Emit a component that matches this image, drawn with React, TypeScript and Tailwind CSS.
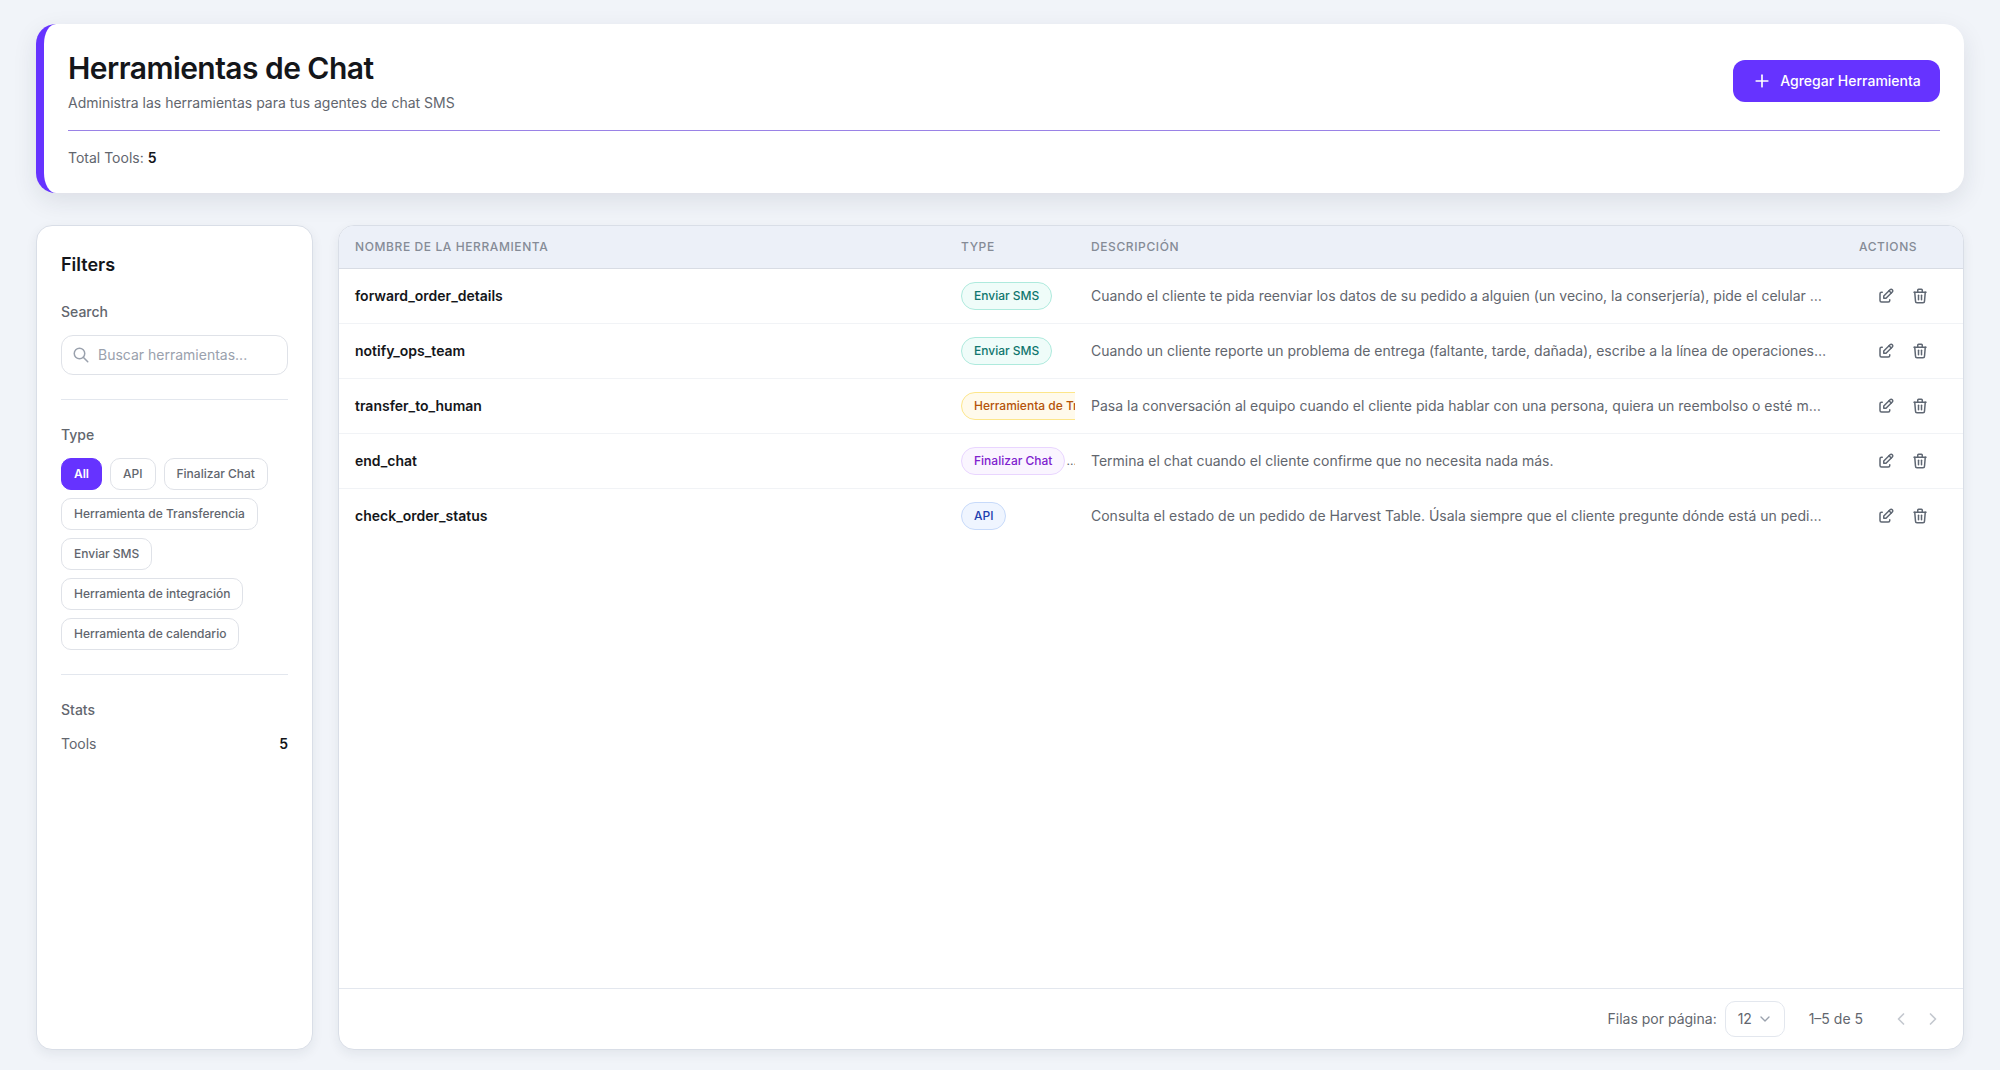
import { TbChevronDown, TbChevronLeft, TbChevronRight, TbEdit, TbPlus, TbSearch, TbTrash } from "react-icons/tb";

const FILTERS = [
  "All",
  "API",
  "Finalizar Chat",
  "Herramienta de Transferencia",
  "Enviar SMS",
  "Herramienta de integración",
  "Herramienta de calendario",
];

const TYPE_STYLES: Record<string, string> = {
  sms: "bg-[#effcf9] border-[#aeeadd] text-[#0f766e]",
  transfer: "bg-[#fffaeb] border-[#fde68a] text-[#b45309]",
  end: "bg-[#faf5ff] border-[#e9d5ff] text-[#7e22ce]",
  api: "bg-[#eff5ff] border-[#c7dafa] text-[#1e40af]",
};

const TOOLS = [
  {
    name: "forward_order_details",
    type: "Enviar SMS",
    style: "sms",
    description:
      "Cuando el cliente te pida reenviar los datos de su pedido a alguien (un vecino, la conserjería), pide el celular del destinatario y envíale el resumen.",
  },
  {
    name: "notify_ops_team",
    type: "Enviar SMS",
    style: "sms",
    description:
      "Cuando un cliente reporte un problema de entrega (faltante, tarde, dañada), escribe a la línea de operaciones con el número de pedido.",
  },
  {
    name: "transfer_to_human",
    type: "Herramienta de Transferencia",
    style: "transfer",
    description:
      "Pasa la conversación al equipo cuando el cliente pida hablar con una persona, quiera un reembolso o esté molesto con el servicio recibido.",
  },
  {
    name: "end_chat",
    type: "Finalizar Chat",
    style: "end",
    dots: true,
    description: "Termina el chat cuando el cliente confirme que no necesita nada más.",
  },
  {
    name: "check_order_status",
    type: "API",
    style: "api",
    description:
      "Consulta el estado de un pedido de Harvest Table. Úsala siempre que el cliente pregunte dónde está un pedido o cuándo va a llegar.",
  },
];

export default function App() {
  return (
    <div className="h-[1070px] overflow-hidden bg-[#f1f4f9] px-9 pt-6 pb-5 flex flex-col gap-8 font-['Inter',sans-serif] text-[#111418]">
      {/* header */}
      <header className="h-[169px] shrink-0 rounded-[20px] border-l-8 border-[#6633ff] bg-white pl-6 pr-6 shadow-[0_8px_24px_rgba(30,41,59,0.1)]">
        <div className="flex h-[107px] items-center justify-between border-b border-[#9a82e6] pt-2">
          <div>
            <h1 className="text-[30px] leading-9 font-semibold tracking-[-0.55px] text-[#14161a]">Herramientas de Chat</h1>
            <p className="mt-[7px] text-sm leading-5 text-[#62666e]">Administra las herramientas para tus agentes de chat SMS</p>
          </div>
          <button className="flex h-[42px] w-[207px] items-center justify-center gap-2 rounded-xl bg-[#6633ff] text-sm font-medium text-white">
            <TbPlus size={20} />
            Agregar Herramienta
          </button>
        </div>
        <div className="mt-[17px] text-sm leading-5 text-[#62666e]">
          Total Tools: <span className="font-semibold text-[#14161a]">5</span>
        </div>
      </header>

      <div className="flex min-h-0 flex-1 gap-[25px]">
        {/* filters */}
        <aside className="w-[277px] shrink-0 rounded-2xl border border-[#d9dee7] bg-white px-6 pt-[27px] shadow-[0_4px_12px_rgba(30,41,59,0.07)]">
          <h2 className="text-lg leading-6 font-semibold text-[#14161a]">Filters</h2>
          <div className="mt-[25px] text-sm leading-5 font-medium text-[#62666e]">Search</div>
          <div className="mt-[13px] flex h-10 items-center gap-2 rounded-xl border border-[#dfe2e8] px-[10px]">
            <TbSearch size={18} className="text-[#9aa1ad]" />
            <span className="text-sm text-[#9aa1ad]">Buscar herramientas...</span>
          </div>
          <div className="mt-6 border-t border-[#e3e7ee]" />
          <div className="mt-[25px] text-sm leading-5 font-medium text-[#62666e]">Type</div>
          <div className="mt-[13px] flex flex-wrap gap-2">
            {FILTERS.map((f, i) => (
              <button
                key={f}
                className={
                  i === 0
                    ? "h-8 rounded-[10px] border border-[#6633ff] bg-[#6633ff] px-3 text-xs font-semibold text-white"
                    : "h-8 rounded-[10px] border border-[#dfe2e8] bg-white px-3 text-xs font-medium text-[#62666e]"
                }
              >
                {f}
              </button>
            ))}
          </div>
          <div className="mt-6 border-t border-[#e3e7ee]" />
          <div className="mt-[25px] text-sm leading-5 font-medium text-[#62666e]">Stats</div>
          <div className="mt-[14px] flex items-center justify-between text-sm leading-5 text-[#62666e]">
            <span>Tools</span>
            <span className="font-semibold text-[#14161a]">5</span>
          </div>
        </aside>

        {/* table */}
        <section className="flex min-w-0 flex-1 flex-col overflow-hidden rounded-2xl border border-[#d9dee7] bg-white shadow-[0_4px_12px_rgba(30,41,59,0.07)]">
          <div className="flex h-[43px] shrink-0 items-center border-b border-[#d8dce4] bg-[#ecf0f8] text-xs font-medium tracking-[0.6px] text-[#858b96]">
            <div className="w-[606px] pl-4">NOMBRE DE LA HERRAMIENTA</div>
            <div className="w-[130px] pl-4">TYPE</div>
            <div className="min-w-0 flex-1 pl-4">DESCRIPCIÓN</div>
            <div className="w-[120px] pl-4">ACTIONS</div>
          </div>
          <div className="flex-1">
            {TOOLS.map((t) => (
              <div key={t.name} className="flex h-[55px] items-center border-b border-[#f1f3f6] last:border-b-transparent">
                <div className="w-[606px] pl-4 text-sm font-semibold text-[#14161a]">{t.name}</div>
                <div className="flex w-[130px] items-center overflow-hidden pl-4">
                  <span className={`inline-flex h-7 shrink-0 items-center rounded-full border px-3 text-xs font-medium ${TYPE_STYLES[t.style]}`}>
                    {t.type}
                  </span>
                  {t.dots && <span className="pl-px text-xs text-[#62666e]">...</span>}
                </div>
                <div className="min-w-0 flex-1 truncate px-4 text-sm text-[#62666e]">{t.description}</div>
                <div className="flex w-[120px] items-center gap-4 pl-[34px] text-[#5f6773]">
                  <TbEdit size={18} />
                  <TbTrash size={18} />
                </div>
              </div>
            ))}
          </div>
          <div className="flex h-[61px] shrink-0 items-center justify-end border-t border-[#e3e7ee] pr-5 text-sm text-[#62666e]">
            <span>Filas por página:</span>
            <div className="ml-2 flex h-9 w-[60px] items-center gap-[5px] rounded-[10px] border border-[#e3e7ee] pl-3">
              12 <TbChevronDown size={16} className="text-[#9aa1ad]" />
            </div>
            <span className="ml-6">1–5 de 5</span>
            <TbChevronLeft size={20} className="ml-7 text-[#c4c8cf]" />
            <TbChevronRight size={20} className="ml-3 text-[#c4c8cf]" />
          </div>
        </section>
      </div>
    </div>
  );
}
